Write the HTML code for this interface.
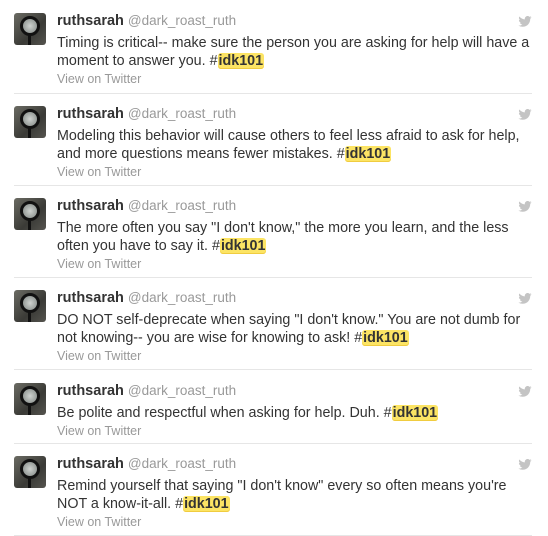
<!DOCTYPE html>
<html><head><style>
body{margin:0;background:#fff;font-family:"Liberation Sans",Arial,sans-serif;width:548px;height:520px;overflow:hidden;}
.t{position:absolute;left:14px;width:518px;border-bottom:1px solid #e6e6e6;}
.av{position:absolute;left:0;top:2px;width:32px;height:32px;border-radius:3px;background:linear-gradient(135deg,#6b6b63,#3a3a36 60%,#55544f);overflow:hidden;}
.av:before{content:"";position:absolute;left:6px;top:3px;width:14px;height:14px;border-radius:50%;border:3px solid #111;background:radial-gradient(#cfd3d0,#7f8582);}
.av:after{content:"";position:absolute;left:14px;top:20px;width:3px;height:12px;background:#111;}
.c{margin-left:43px;}
.n{font-size:14.5px;line-height:18px;color:#333;font-weight:bold;margin-top:1px;}
.n span{font-weight:normal;color:#999;font-size:13.5px;}
.x{font-size:14.3px;line-height:18px;color:#333;margin-top:4px;}
.h{background:#fce464;border-radius:3px;font-weight:bold;padding:0 1px;box-shadow:inset 0 -1px 0 #f0cc40;}
.v{font-size:12.5px;line-height:18px;color:#999;margin-top:0px;}
.b{position:absolute;right:0;top:5px;width:14px;height:11px;}
</style></head><body>
<div class="t" style="top:11px;height:82px">
<div class="av"></div><svg class="b" viewBox="0 0 24 20"><path fill="#c4c4c4" d="M24 2.4a9.8 9.8 0 0 1-2.8.8A4.9 4.9 0 0 0 23.3.5a9.9 9.9 0 0 1-3.1 1.2A4.9 4.9 0 0 0 11.8 6.2 14 14 0 0 1 1.7 1 4.9 4.9 0 0 0 3.2 7.6a4.9 4.9 0 0 1-2.2-.6 4.9 4.9 0 0 0 3.900 4.9 4.900 4.900 0 0 1-2.2.1 4.9 4.9 0 0 0 4.6 3.4A9.9 9.9 0 0 1 0 17.4 14 14 0 0 0 7.5 19.6c9.1 0 14-7.5 14-14v-.6A10 10 0 0 0 24 2.4z"/></svg>
<div class="c"><div class="n">ruthsarah <span>@dark_roast_ruth</span></div>
<div class="x">Timing is critical-- make sure the person you are asking for help will have a moment to answer you. #<span class="h">idk101</span></div>
<div class="v">View on Twitter</div></div></div>

<div class="t" style="top:104px;height:81px">
<div class="av"></div><svg class="b" viewBox="0 0 24 20"><path fill="#c4c4c4" d="M24 2.4a9.8 9.8 0 0 1-2.8.8A4.9 4.9 0 0 0 23.3.5a9.9 9.9 0 0 1-3.1 1.2A4.9 4.9 0 0 0 11.8 6.2 14 14 0 0 1 1.7 1 4.9 4.9 0 0 0 3.2 7.6a4.9 4.9 0 0 1-2.2-.6 4.9 4.9 0 0 0 3.9 4.9 4.9 4.9 0 0 1-2.2.1 4.9 4.9 0 0 0 4.6 3.4A9.9 9.9 0 0 1 0 17.4 14 14 0 0 0 7.5 19.6c9.1 0 14-7.5 14-14v-.6A10 10 0 0 0 24 2.4z"/></svg>
<div class="c"><div class="n">ruthsarah <span>@dark_roast_ruth</span></div>
<div class="x">Modeling this behavior will cause others to feel less afraid to ask for help, and more questions means fewer mistakes. #<span class="h">idk101</span></div>
<div class="v">View on Twitter</div></div></div>

<div class="t" style="top:196px;height:81px">
<div class="av"></div><svg class="b" viewBox="0 0 24 20"><path fill="#c4c4c4" d="M24 2.4a9.8 9.8 0 0 1-2.8.8A4.9 4.9 0 0 0 23.3.5a9.9 9.9 0 0 1-3.1 1.2A4.9 4.9 0 0 0 11.8 6.2 14 14 0 0 1 1.7 1 4.9 4.9 0 0 0 3.2 7.6a4.9 4.9 0 0 1-2.2-.6 4.9 4.9 0 0 0 3.9 4.9 4.9 4.9 0 0 1-2.2.1 4.9 4.9 0 0 0 4.6 3.4A9.9 9.9 0 0 1 0 17.4 14 14 0 0 0 7.5 19.6c9.1 0 14-7.5 14-14v-.6A10 10 0 0 0 24 2.4z"/></svg>
<div class="c"><div class="n">ruthsarah <span>@dark_roast_ruth</span></div>
<div class="x">The more often you say "I don't know," the more you learn, and the less often you have to say it. #<span class="h">idk101</span></div>
<div class="v">View on Twitter</div></div></div>

<div class="t" style="top:288px;height:81px">
<div class="av"></div><svg class="b" viewBox="0 0 24 20"><path fill="#c4c4c4" d="M24 2.4a9.8 9.8 0 0 1-2.8.8A4.9 4.9 0 0 0 23.3.5a9.9 9.9 0 0 1-3.1 1.2A4.9 4.9 0 0 0 11.8 6.2 14 14 0 0 1 1.7 1 4.9 4.9 0 0 0 3.2 7.6a4.9 4.9 0 0 1-2.2-.6 4.9 4.9 0 0 0 3.9 4.9 4.9 4.9 0 0 1-2.2.1 4.9 4.9 0 0 0 4.6 3.4A9.9 9.9 0 0 1 0 17.4 14 14 0 0 0 7.5 19.6c9.1 0 14-7.5 14-14v-.6A10 10 0 0 0 24 2.4z"/></svg>
<div class="c"><div class="n">ruthsarah <span>@dark_roast_ruth</span></div>
<div class="x">DO NOT self-deprecate when saying "I don't know." You are not dumb for not knowing-- you are wise for knowing to ask! #<span class="h">idk101</span></div>
<div class="v">View on Twitter</div></div></div>

<div class="t" style="top:381px;height:62px">
<div class="av"></div><svg class="b" viewBox="0 0 24 20"><path fill="#c4c4c4" d="M24 2.4a9.8 9.8 0 0 1-2.8.8A4.9 4.9 0 0 0 23.3.5a9.9 9.9 0 0 1-3.1 1.2A4.9 4.9 0 0 0 11.8 6.2 14 14 0 0 1 1.7 1 4.9 4.9 0 0 0 3.2 7.6a4.9 4.9 0 0 1-2.2-.6 4.9 4.9 0 0 0 3.9 4.9 4.9 4.9 0 0 1-2.2.1 4.9 4.9 0 0 0 4.6 3.4A9.9 9.9 0 0 1 0 17.4 14 14 0 0 0 7.5 19.6c9.1 0 14-7.5 14-14v-.6A10 10 0 0 0 24 2.4z"/></svg>
<div class="c"><div class="n">ruthsarah <span>@dark_roast_ruth</span></div>
<div class="x">Be polite and respectful when asking for help. Duh. #<span class="h">idk101</span></div>
<div class="v">View on Twitter</div></div></div>

<div class="t" style="top:454px;height:81px">
<div class="av"></div><svg class="b" viewBox="0 0 24 20"><path fill="#c4c4c4" d="M24 2.4a9.8 9.8 0 0 1-2.8.8A4.9 4.9 0 0 0 23.3.5a9.9 9.9 0 0 1-3.1 1.2A4.9 4.9 0 0 0 11.8 6.2 14 14 0 0 1 1.7 1 4.9 4.9 0 0 0 3.2 7.6a4.9 4.9 0 0 1-2.2-.6 4.9 4.9 0 0 0 3.9 4.9 4.9 4.9 0 0 1-2.2.1 4.9 4.9 0 0 0 4.6 3.4A9.9 9.9 0 0 1 0 17.4 14 14 0 0 0 7.5 19.6c9.1 0 14-7.5 14-14v-.6A10 10 0 0 0 24 2.4z"/></svg>
<div class="c"><div class="n">ruthsarah <span>@dark_roast_ruth</span></div>
<div class="x">Remind yourself that saying "I don't know" every so often means you're NOT a know-it-all. #<span class="h">idk101</span></div>
<div class="v">View on Twitter</div></div></div>
</body></html>
